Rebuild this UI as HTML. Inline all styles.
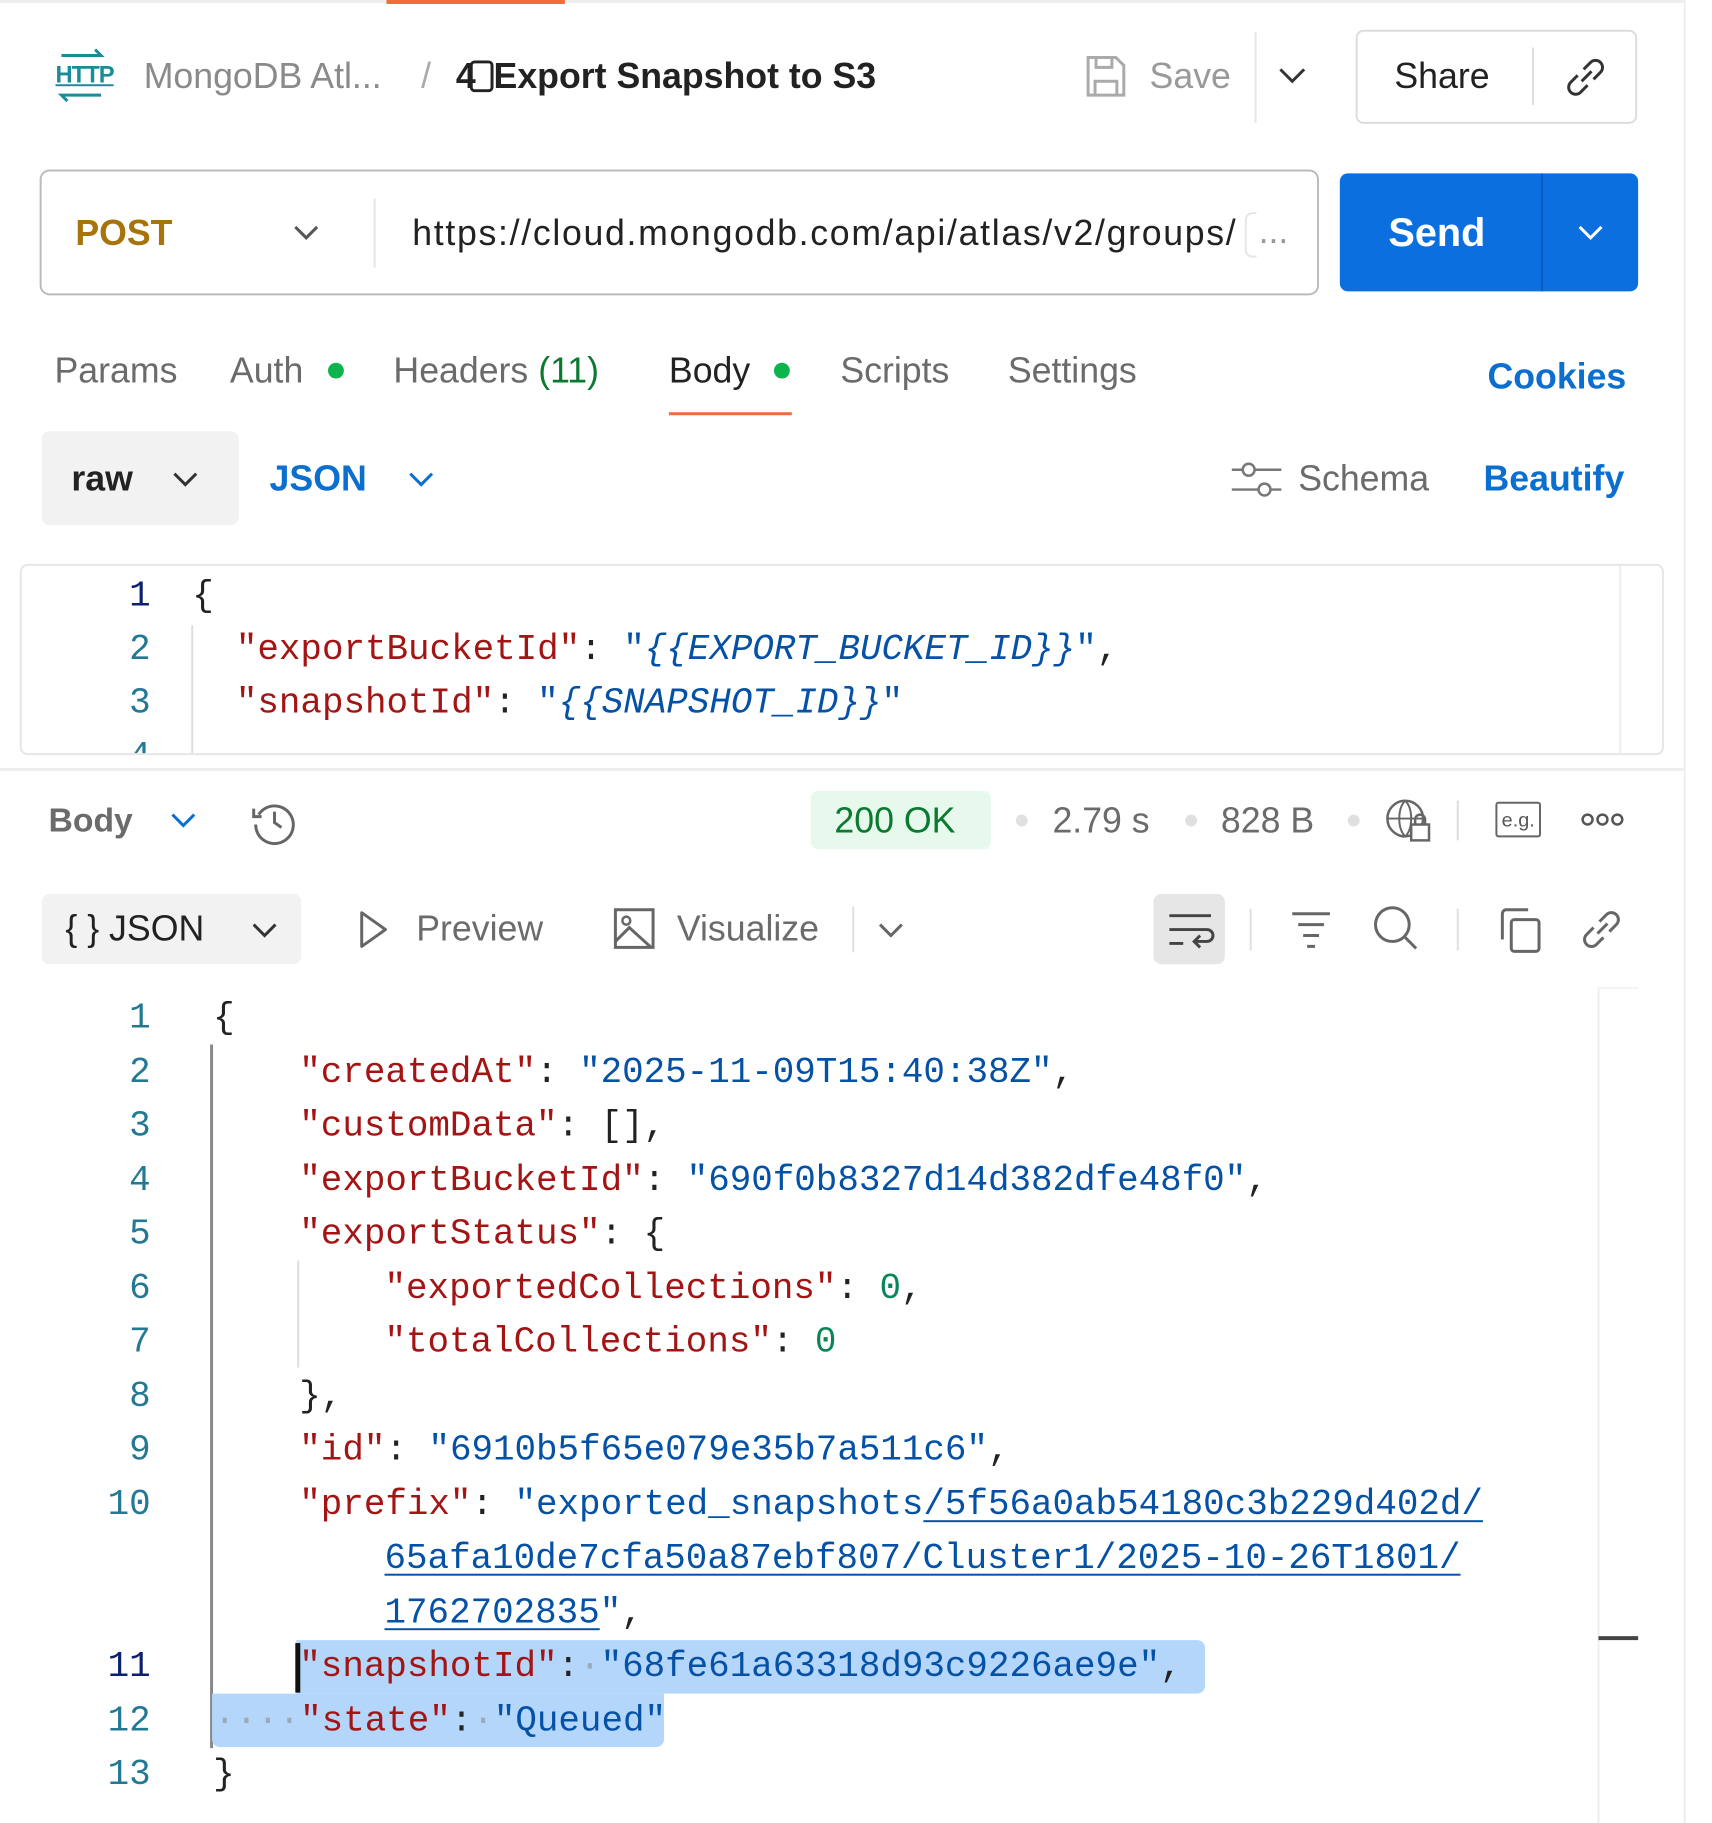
<!DOCTYPE html>
<html><head><meta charset="utf-8"><style>
body{margin:0;width:1712px;height:1820px;background:#fff;position:relative;overflow:hidden;font-family:"Liberation Sans",sans-serif;}
#w{position:absolute;left:0;top:0;width:1728px;height:1840px;transform:scale(0.991);transform-origin:0 0;}
.a{position:absolute;white-space:pre;line-height:54px;}
.ui{font-size:36px;color:#6b6b6b;}
.m{font-family:"Liberation Mono",monospace;font-size:36.2px;}
.k{color:#a31515}.s{color:#0451a5}.n{color:#098658}.p{color:#222}
.ln{color:#237893;text-align:right;width:60px}
.u{text-decoration:underline;text-decoration-thickness:2px;text-underline-offset:6px}
svg{position:absolute;overflow:visible}
</style></head><body><div id="w">
<div style="position:absolute;left:0;top:0;width:1700px;height:3px;background:#eee"></div>
<div style="position:absolute;left:390px;top:0;width:180px;height:4px;background:#f26b3a"></div>
<div style="position:absolute;left:1699px;top:0;width:2px;height:1840px;background:#eee"></div>

<div class="a" style="left:56px;top:58px;font-size:24px;color:#1d8a9a;line-height:36px;text-decoration:underline;font-weight:bold;letter-spacing:-1px">HTTP</div>
<svg style="left:56px;top:52px" width="52" height="50"><path d="M6 4h40l-6-6M46 44H6l6 6" stroke="#1d8a9a" stroke-width="3" fill="none"/></svg>
<div class="a ui" style="left:145px;top:50px;color:#8a8a8a">MongoDB Atl...</div>
<div class="a ui" style="left:425px;top:50px;color:#aaa">/</div>
<div class="a ui" style="left:460px;top:50px;color:#222;font-weight:bold">4<span style="display:inline-block;width:24px;height:32px;border:3px solid #222;border-radius:5px;vertical-align:-4px;margin-left:-6px;box-sizing:border-box"></span>Export Snapshot to S3</div>
<svg style="left:1095px;top:55px" width="42" height="44"><path d="M3 3h28l8 8v30H3z M11 3v10h16V3 M10 41V27h22v14" stroke="#aaa" stroke-width="3" fill="none"/></svg>
<div class="a ui" style="left:1160px;top:50px;color:#9a9a9a">Save</div>
<div style="position:absolute;left:1266px;top:32px;width:2px;height:92px;background:#e6e6e6"></div>
<svg style="left:1290px;top:68px" width="28" height="16"><path d="M2 2l12 12 12-12" stroke="#333" stroke-width="3" fill="none"/></svg>
<div style="position:absolute;left:1368px;top:30px;width:280px;height:91px;border:2px solid #ddd;border-radius:8px"></div>
<div class="a ui" style="left:1407px;top:50px;color:#222">Share</div>
<div style="position:absolute;left:1546px;top:48px;width:2px;height:58px;background:#ddd"></div>
<svg style="left:1578px;top:56px" width="44" height="44"><path d="M18 26l10-10 M14 20l-7 7a7 7 0 0 0 10 10l7-7 M30 24l7-7a7 7 0 0 0-10-10l-7 7" stroke="#333" stroke-width="3" fill="none"/></svg>

<div style="position:absolute;left:40px;top:171px;width:1287px;height:123px;border:2px solid #bbb;border-radius:10px"></div>
<div class="a ui" style="left:76px;top:208px;color:#a6740a;font-weight:bold">POST</div>
<svg style="left:296px;top:227px" width="26" height="14"><path d="M2 2l11 11 11-11" stroke="#555" stroke-width="3" fill="none"/></svg>
<div style="position:absolute;left:377px;top:200px;width:2px;height:70px;background:#e6e6e6"></div>
<div class="a ui" style="left:416px;top:208px;color:#222;letter-spacing:1.7px">https://cloud.mongodb.com/api/atlas/v2/groups/</div>
<div style="position:absolute;left:1256px;top:214px;width:10px;height:42px;border:2px solid #e5e5e5;border-right:none;border-radius:8px 0 0 8px"></div>
<div class="a ui" style="left:1270px;top:206px;color:#999">...</div>
<div style="position:absolute;left:1352px;top:175px;width:301px;height:119px;background:#0b6fe0;border-radius:8px"></div>
<div style="position:absolute;left:1555px;top:175px;width:2px;height:119px;background:#0a5dc0"></div>
<div class="a" style="left:1401px;top:208px;color:#fff;font-size:40px;font-weight:bold">Send</div>
<svg style="left:1592px;top:227px" width="26" height="14"><path d="M2 2l11 11 11-11" stroke="#fff" stroke-width="3" fill="none"/></svg>

<div class="a ui" style="left:55px;top:347px">Params</div>
<div class="a ui" style="left:232px;top:347px">Auth</div>
<div style="position:absolute;left:331px;top:366px;width:16px;height:16px;border-radius:50%;background:#0cb44e"></div>
<div class="a ui" style="left:397px;top:347px">Headers <span style="color:#0a7a2f">(11)</span></div>
<div class="a ui" style="left:675px;top:347px;color:#222">Body</div>
<div style="position:absolute;left:781px;top:366px;width:16px;height:16px;border-radius:50%;background:#0cb44e"></div>
<div style="position:absolute;left:675px;top:416px;width:124px;height:3px;background:#f26b3a"></div>
<div class="a ui" style="left:848px;top:347px">Scripts</div>
<div class="a ui" style="left:1017px;top:347px">Settings</div>
<div class="a ui" style="left:1501px;top:353px;color:#0b6fd0;font-weight:bold">Cookies</div>

<div style="position:absolute;left:42px;top:435px;width:199px;height:95px;background:#f2f2f2;border-radius:8px"></div>
<div class="a ui" style="left:72px;top:456px;color:#222;font-weight:bold">raw</div>
<svg style="left:174px;top:476px" width="26" height="14"><path d="M2 2l11 11 11-11" stroke="#333" stroke-width="3" fill="none"/></svg>
<div class="a ui" style="left:272px;top:456px;color:#0b6fd0;font-weight:bold">JSON</div>
<svg style="left:412px;top:476px" width="26" height="14"><path d="M2 2l11 11 11-11" stroke="#0b6fd0" stroke-width="3" fill="none"/></svg>
<svg style="left:1243px;top:464px" width="50" height="40"><path d="M0 10h50 M0 30h50" stroke="#777" stroke-width="2.5"/><circle cx="17" cy="10" r="6" fill="#fff" stroke="#777" stroke-width="2.5"/><circle cx="33" cy="30" r="6" fill="#fff" stroke="#777" stroke-width="2.5"/></svg>
<div class="a ui" style="left:1310px;top:456px">Schema</div>
<div class="a ui" style="left:1497px;top:456px;color:#0b6fd0;font-weight:bold">Beautify</div>

<div style="position:absolute;left:20px;top:569px;width:1655px;height:189px;border:2px solid #e6e6e6;border-radius:8px;overflow:hidden">
 <div style="position:absolute;left:1612px;top:0;width:2px;height:189px;background:#eee"></div>
 <div style="position:absolute;left:171px;top:60px;width:2px;height:140px;background:#ddd"></div>
 <div class="a m ln" style="left:70px;top:4px;color:#0b216f">1</div>
 <div class="a m ln" style="left:70px;top:58px">2</div>
 <div class="a m ln" style="left:70px;top:112px">3</div>
 <div class="a m ln" style="left:70px;top:166px">4</div>
 <div class="a m p" style="left:172px;top:4px">{</div>
 <div class="a m" style="left:216px;top:58px"><span class="k">"exportBucketId"</span><span class="p">: </span><span class="s">"<i>{{EXPORT_BUCKET_ID}}</i>"</span><span class="p">,</span></div>
 <div class="a m" style="left:216px;top:112px"><span class="k">"snapshotId"</span><span class="p">: </span><span class="s">"<i>{{SNAPSHOT_ID}}</i>"</span></div>
</div>
<div style="position:absolute;left:0;top:775px;width:1700px;height:3px;background:#eee"></div>

<div class="a ui" style="left:49px;top:801px;font-weight:bold;font-size:34px">Body</div>
<svg style="left:172px;top:820px" width="26" height="14"><path d="M2 2l11 11 11-11" stroke="#0b6fd0" stroke-width="3" fill="none"/></svg>
<svg style="left:254px;top:806px" width="46" height="46"><path d="M7 16A19 19 0 1 1 4 26 M2 10v8h8 M23 13v11l7 5" stroke="#666" stroke-width="3" fill="none"/></svg>
<div style="position:absolute;left:818px;top:798px;width:182px;height:59px;background:#e6f9ec;border-radius:8px"></div>
<div class="a ui" style="left:842px;top:801px;color:#0a7a2f">200 OK</div>
<div style="position:absolute;left:1025px;top:822px;width:12px;height:12px;border-radius:50%;background:#e0e0e0"></div>
<div class="a ui" style="left:1062px;top:801px">2.79 s</div>
<div style="position:absolute;left:1196px;top:822px;width:12px;height:12px;border-radius:50%;background:#e0e0e0"></div>
<div class="a ui" style="left:1232px;top:801px">828 B</div>
<div style="position:absolute;left:1360px;top:822px;width:12px;height:12px;border-radius:50%;background:#e0e0e0"></div>
<svg style="left:1398px;top:806px" width="48" height="44"><circle cx="20" cy="20" r="18" stroke="#666" stroke-width="2.5" fill="none"/><path d="M2 20h36 M20 2c-8 8-8 28 0 36 M20 2c8 8 8 28 0 36" stroke="#666" stroke-width="2" fill="none"/><rect x="26" y="26" width="18" height="16" fill="#fff" stroke="#666" stroke-width="2.5"/><path d="M30 26v-5a5 5 0 0 1 10 0v5" stroke="#666" stroke-width="2.5" fill="none"/></svg>
<div style="position:absolute;left:1470px;top:808px;width:2px;height:40px;background:#ddd"></div>
<div style="position:absolute;left:1509px;top:809px;width:46px;height:36px;border:2.5px solid #666;border-radius:3px;font-size:20px;color:#555;text-align:center;line-height:34px;box-sizing:border-box">e.g.</div>
<svg style="left:1596px;top:820px" width="44" height="14"><circle cx="6" cy="7" r="5" stroke="#555" stroke-width="2.5" fill="none"/><circle cx="21" cy="7" r="5" stroke="#555" stroke-width="2.5" fill="none"/><circle cx="36" cy="7" r="5" stroke="#555" stroke-width="2.5" fill="none"/></svg>

<div style="position:absolute;left:42px;top:902px;width:262px;height:71px;background:#f2f2f2;border-radius:8px"></div>
<div class="a ui" style="left:66px;top:910px;color:#222">{ } JSON</div>
<svg style="left:254px;top:931px" width="26" height="14"><path d="M2 2l11 11 11-11" stroke="#333" stroke-width="3" fill="none"/></svg>
<svg style="left:362px;top:918px" width="30" height="40"><path d="M3 3l24 17-24 17z" stroke="#666" stroke-width="3" fill="none" stroke-linejoin="round"/></svg>
<div class="a ui" style="left:420px;top:910px">Preview</div>
<svg style="left:619px;top:916px" width="42" height="42"><rect x="2" y="2" width="38" height="38" stroke="#666" stroke-width="3" fill="none"/><circle cx="13" cy="13" r="4" stroke="#666" stroke-width="2.5" fill="none"/><path d="M2 34l14-14 22 20" stroke="#666" stroke-width="3" fill="none"/></svg>
<div class="a ui" style="left:683px;top:910px">Visualize</div>
<div style="position:absolute;left:860px;top:915px;width:2px;height:46px;background:#e0e0e0"></div>
<svg style="left:886px;top:931px" width="26" height="14"><path d="M2 2l11 11 11-11" stroke="#666" stroke-width="3" fill="none"/></svg>
<div style="position:absolute;left:1164px;top:902px;width:72px;height:71px;background:#e6e6e6;border-radius:8px"></div>
<svg style="left:1178px;top:920px" width="46" height="40"><path d="M2 4h42 M2 18h38a6 6 0 0 1 0 12H28 M33 24l-6 6 6 6 M2 32h14" stroke="#444" stroke-width="3" fill="none"/></svg>
<div style="position:absolute;left:1261px;top:917px;width:2px;height:42px;background:#e0e0e0"></div>
<svg style="left:1302px;top:918px" width="42" height="40"><path d="M2 4h38 M8 15h26 M13 26h16 M17 37h8" stroke="#666" stroke-width="3"/></svg>
<svg style="left:1386px;top:914px" width="46" height="46"><circle cx="19" cy="19" r="17" stroke="#666" stroke-width="3" fill="none"/><path d="M31 31l12 12" stroke="#666" stroke-width="3"/></svg>
<div style="position:absolute;left:1470px;top:917px;width:2px;height:42px;background:#e0e0e0"></div>
<svg style="left:1512px;top:916px" width="44" height="46"><path d="M4 32V6a4 4 0 0 1 4-4h22" stroke="#666" stroke-width="3" fill="none"/><rect x="13" y="12" width="28" height="32" rx="3" stroke="#666" stroke-width="3" fill="none"/></svg>
<svg style="left:1594px;top:916px" width="44" height="44"><path d="M18 26l10-10 M14 20l-7 7a7 7 0 0 0 10 10l7-7 M30 24l7-7a7 7 0 0 0-10-10l-7 7" stroke="#666" stroke-width="3" fill="none"/></svg>

<div style="position:absolute;left:1612px;top:996px;width:2px;height:844px;background:#eee"></div>
<div style="position:absolute;left:1612px;top:996px;width:42px;height:2px;background:#f3f3f3"></div>
<div style="position:absolute;left:1613px;top:1651px;width:40px;height:4px;background:#444"></div>
<div style="position:absolute;left:212px;top:1054px;width:3px;height:710px;background:#888"></div>
<div style="position:absolute;left:300px;top:1272px;width:2px;height:108px;background:#ddd"></div>
<div style="position:absolute;left:299px;top:1655px;width:917px;height:54px;background:#b4d6fb;border-radius:0 8px 8px 0"></div>
<div style="position:absolute;left:214px;top:1709px;width:456px;height:54px;background:#b4d6fb;border-radius:0 0 8px 8px"></div>
<div style="position:absolute;left:298px;top:1658px;width:5px;height:50px;background:#111"></div>

<div class="a m ln" style="left:92px;top:1001px">1</div>
<div class="a m ln" style="left:92px;top:1056px">2</div>
<div class="a m ln" style="left:92px;top:1110px">3</div>
<div class="a m ln" style="left:92px;top:1165px">4</div>
<div class="a m ln" style="left:92px;top:1219px">5</div>
<div class="a m ln" style="left:92px;top:1274px">6</div>
<div class="a m ln" style="left:92px;top:1328px">7</div>
<div class="a m ln" style="left:92px;top:1383px">8</div>
<div class="a m ln" style="left:92px;top:1437px">9</div>
<div class="a m ln" style="left:92px;top:1492px">10</div>
<div class="a m ln" style="left:92px;top:1655px;color:#0b216f">11</div>
<div class="a m ln" style="left:92px;top:1710px">12</div>
<div class="a m ln" style="left:92px;top:1764px">13</div>

<div class="a m p" style="left:215px;top:1001px">{</div>
<div class="a m" style="left:302px;top:1056px"><span class="k">"createdAt"</span><span class="p">: </span><span class="s">"2025-11-09T15:40:38Z"</span><span class="p">,</span></div>
<div class="a m" style="left:302px;top:1110px"><span class="k">"customData"</span><span class="p">: [],</span></div>
<div class="a m" style="left:302px;top:1165px"><span class="k">"exportBucketId"</span><span class="p">: </span><span class="s">"690f0b8327d14d382dfe48f0"</span><span class="p">,</span></div>
<div class="a m" style="left:302px;top:1219px"><span class="k">"exportStatus"</span><span class="p">: {</span></div>
<div class="a m" style="left:388px;top:1274px"><span class="k">"exportedCollections"</span><span class="p">: </span><span class="n">0</span><span class="p">,</span></div>
<div class="a m" style="left:388px;top:1328px"><span class="k">"totalCollections"</span><span class="p">: </span><span class="n">0</span></div>
<div class="a m p" style="left:302px;top:1383px">},</div>
<div class="a m" style="left:302px;top:1437px"><span class="k">"id"</span><span class="p">: </span><span class="s">"6910b5f65e079e35b7a511c6"</span><span class="p">,</span></div>
<div class="a m" style="left:302px;top:1492px"><span class="k">"prefix"</span><span class="p">: </span><span class="s">"exported_snapshots<span class="u">/5f56a0ab54180c3b229d402d/</span></span></div>
<div class="a m s" style="left:388px;top:1546px"><span class="u">65afa10de7cfa50a87ebf807/Cluster1/2025-10-26T1801/</span></div>
<div class="a m" style="left:388px;top:1601px"><span class="s"><span class="u">1762702835</span>"</span><span class="p">,</span></div>
<div class="a m" style="left:302px;top:1655px"><span class="k">"snapshotId"</span><span class="p">:</span><span style="color:#9ab">·</span><span class="s">"68fe61a63318d93c9226ae9e"</span><span class="p">,</span></div>
<div class="a m" style="left:216px;top:1710px"><span style="color:#9ab">····</span><span class="k">"state"</span><span class="p">:</span><span style="color:#9ab">·</span><span class="s">"Queued"</span></div>
<div class="a m p" style="left:215px;top:1764px">}</div>
</div></body></html>
